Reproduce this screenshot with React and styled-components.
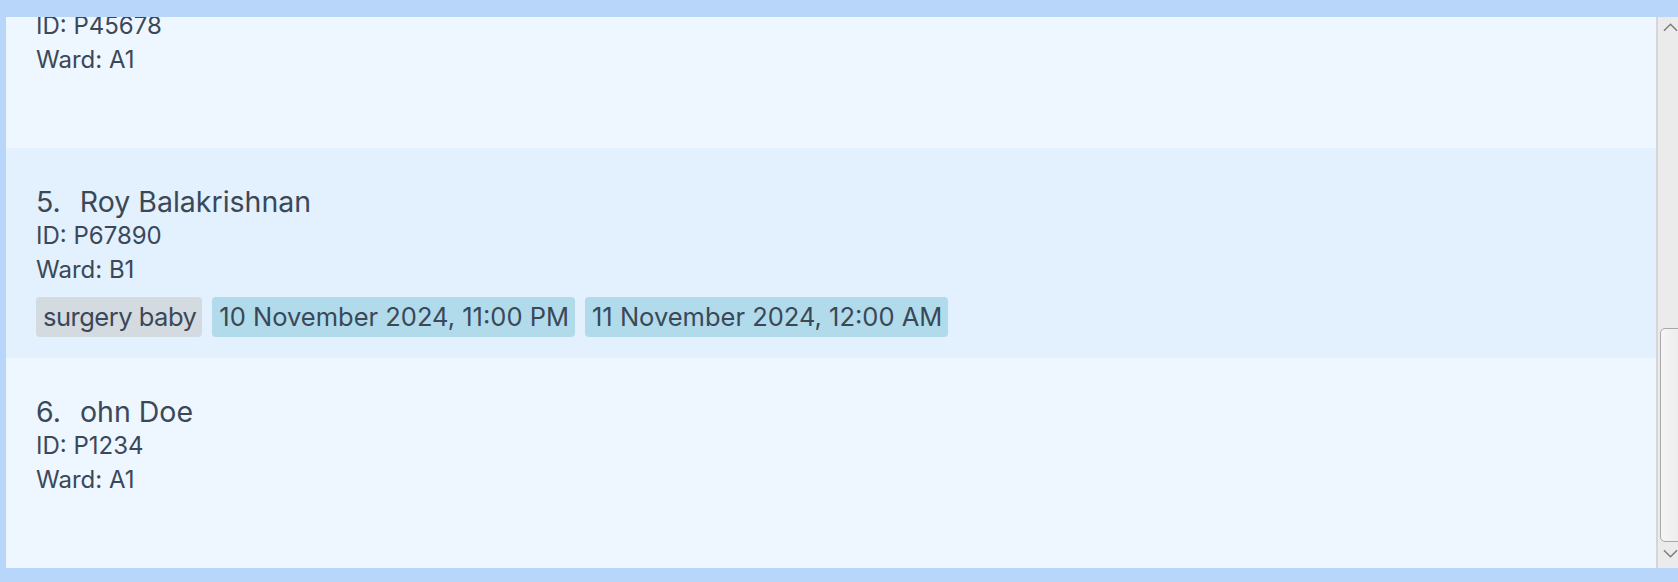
import { useLayoutEffect, useRef } from "react";
import styled, { createGlobalStyle } from "styled-components";

const GlobalStyle = createGlobalStyle`
  html, body {
    margin: 0;
    padding: 0;
    background: #b8d6f9;
  }
  * {
    box-sizing: border-box;
  }
`;

const patients = [
  { name: "Alex Yeoh", id: "P12345", ward: "A1", tags: [] },
  { name: "Bernice Yu", id: "P23456", ward: "A2", tags: [] },
  { name: "Charlotte Oliveiro", id: "P34567", ward: "B2", tags: [] },
  { name: "David Li", id: "P45678", ward: "A1", tags: [] },
  {
    name: "Roy Balakrishnan",
    id: "P67890",
    ward: "B1",
    tags: [
      { label: "surgery baby", kind: "tag" },
      { label: "10 November 2024, 11:00 PM", kind: "appt" },
      { label: "11 November 2024, 12:00 AM", kind: "appt" },
    ],
  },
  { name: "ohn Doe", id: "P1234", ward: "A1", tags: [] },
];

const App = () => {
  const listRef = useRef(null);

  // the list sits scrolled all the way down
  useLayoutEffect(() => {
    const el = listRef.current;
    if (el) el.scrollTop = el.scrollHeight;
  }, []);

  return (
    <Window>
      <GlobalStyle />
      <List ref={listRef}>
        {patients.map((p, i) => (
          <Card key={p.id}>
            <NameRow>
              <span>{i + 1}.</span>
              <span>{p.name}</span>
            </NameRow>
            <Detail>ID: {p.id}</Detail>
            <Detail>Ward: {p.ward}</Detail>
            <Tags>
              {p.tags.map((t) => (
                <Tag key={t.label} $kind={t.kind}>
                  {t.label}
                </Tag>
              ))}
            </Tags>
          </Card>
        ))}
      </List>
      <ScrollBar>
        <Arrow $top>
          <svg width="16" height="10" viewBox="0 0 16 10">
            <path d="M1 9 L8 2 L15 9" fill="none" stroke="#7d7d7d" strokeWidth="1.6" />
          </svg>
        </Arrow>
        <Track>
          <Thumb $size={214} />
        </Track>
        <Arrow>
          <svg width="16" height="10" viewBox="0 0 16 10">
            <path d="M1 1 L8 8 L15 1" fill="none" stroke="#7d7d7d" strokeWidth="1.6" />
          </svg>
        </Arrow>
      </ScrollBar>
    </Window>
  );
};

const Window = styled.div`
  height: 582px;
  padding: 17px 0 14px 6px;
  display: flex;
  background: #b8d6f9;
  font-family: Inter, "Noto Sans", sans-serif;
  color: #3a4858;
`;

const List = styled.div`
  flex: 1;
  overflow: hidden;
  display: flex;
  flex-direction: column;
`;

const Card = styled.div`
  flex: none;
  height: 210px;
  padding: 37px 30px 0;
  &:nth-child(odd) {
    background: #e3f0fe;
  }
  &:nth-child(even) {
    background: #eef6ff;
  }
`;

const NameRow = styled.div`
  display: flex;
  gap: 19px;
  font-size: 28.5px;
  line-height: 34px;
`;

const Detail = styled.div`
  font-size: 24px;
  line-height: 34px;
`;

const Tags = styled.div`
  display: flex;
  flex-wrap: wrap;
  gap: 10px;
  margin-top: 10px;
  min-height: 40px;
`;

const Tag = styled.span`
  height: 40px;
  padding: 4px 6px 4px 7px;
  font-size: 25.5px;
  line-height: 32px;
  letter-spacing: ${(p) => (p.$kind === "appt" ? "0" : "-0.5px")};
  border-radius: 4px;
  background: ${(p) => (p.$kind === "appt" ? "#b1dbea" : "#d3dbe1")};
  white-space: nowrap;
`;

const ScrollBar = styled.div`
  width: 22px;
  display: flex;
  flex-direction: column;
  background: #ebebeb;
  border-left: 2px solid #d6d6d6;
  overflow: hidden;
`;

const Arrow = styled.div`
  height: ${(p) => (p.$top ? "20px" : "26px")};
  display: flex;
  align-items: ${(p) => (p.$top ? "flex-end" : "center")};
  padding-left: 5px;
  padding-bottom: ${(p) => (p.$top ? "5px" : "3px")};
  flex: none;
`;

const Track = styled.div`
  flex: 1;
  display: flex;
  flex-direction: column;
  justify-content: flex-end;
`;

const Thumb = styled.div`
  height: ${(p) => p.$size}px;
  margin-left: 2px;
  width: 26px;
  border: 1px solid #a9a9a9;
  border-radius: 5px;
  background: linear-gradient(to right, #f6f6f6, #e9e9e9);
`;

export default App;
